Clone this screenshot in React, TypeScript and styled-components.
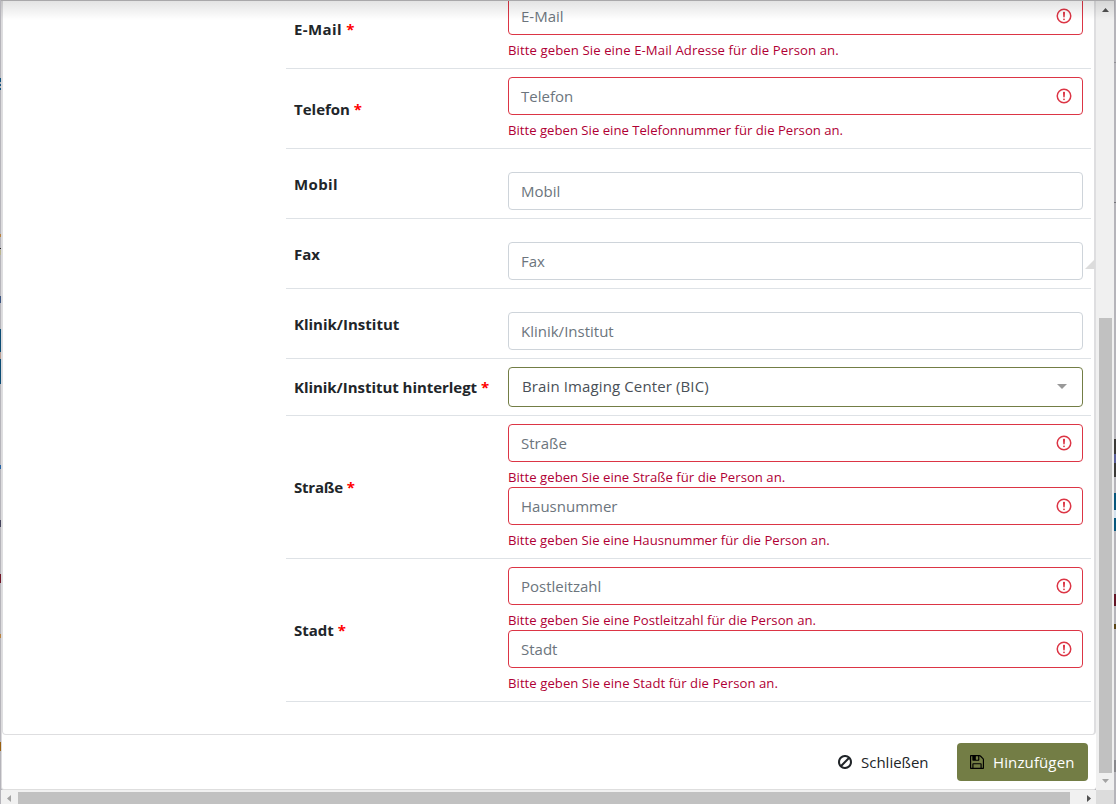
import React from "react";
import styled, { createGlobalStyle } from "styled-components";

const Global = createGlobalStyle`
  *, *::before, *::after { box-sizing: border-box; }
  body { margin: 0; overflow: hidden; background: #b5b4ba; color: #212529;
    font: 15px/24px "Open Sans", "Noto Sans", sans-serif; }
`;

const Page = styled.div`
  position: relative;
  height: 804px;
  width: 1116px;
  display: grid;
  grid-template-columns: 1095px 18px;
  grid-template-rows: 790px 14px;
  padding-left: 1px;
  overflow: hidden;
`;
const Dialog = styled.main`
  display: flex;
  flex-direction: column;
  background: #fff;
  border-left: 1px solid #dcdbdd;
  border-bottom: 1px solid #dedede;
  border-radius: 0 0 3px 3px;
  min-width: 0;
`;
const Body = styled.section`
  height: 735px;
  padding: 0 3px 0 283px;
  border: solid #dedee0;
  border-width: 0 2px 1px 1px;
  border-radius: 0 0 4px 4px;
  overflow: hidden;
`;
const Rows = styled.div`
  margin-top: -11px;
`;
const Row = styled.div<{ $top?: number }>`
  display: grid;
  grid-template-columns: 206px 575px;
  column-gap: 8px;
  align-items: center;
  padding: ${(p) => p.$top ?? 8}px 8px 8px;
  border-bottom: 1px solid #dee2e6;
`;
const Label = styled.label<{ $lift?: boolean; $track?: number }>`
  font-weight: 700;
  white-space: nowrap;
  letter-spacing: ${(p) => p.$track ?? 0}px;
  margin-top: ${(p) => (p.$lift ? -14 : 0)}px;
`;
const Star = styled.span`
  color: #f00;
`;
const Control = styled.div<{ $invalid?: boolean }>`
  display: flex;
  align-items: center;
  justify-content: space-between;
  height: 38px;
  padding: 0 9px 0 12px;
  background: #fff;
  border: 1px solid ${(p) => (p.$invalid ? "#dc3545" : "#ced4da")};
  border-radius: 4px;
  color: #6c757d;
`;
const Select = styled(Control)`
  height: 40px;
  padding: 0 15px 2px 13px;
  border-color: #737d45;
  color: #495057;
  letter-spacing: 0.12px;
`;
const Caret = styled.i`
  border: solid transparent;
  border-width: 5px 5px 0;
  border-top-color: #999;
`;
const Feedback = styled.div<{ $track?: number }>`
  height: 21px;
  margin-top: 4px;
  color: #b00035;
  font-size: 13.15px;
  line-height: 22px;
  letter-spacing: ${(p) => p.$track ?? 0.02}px;
  white-space: nowrap;
`;
const Footer = styled.footer`
  height: 54px;
  display: flex;
  justify-content: flex-end;
  align-items: flex-start;
  gap: 16px;
  padding: 8px 8px 0 0;
`;
const Button = styled.button<{ $primary?: boolean }>`
  display: flex;
  align-items: center;
  gap: 9px;
  height: 38px;
  width: ${(p) => (p.$primary ? 131 : 116)}px;
  padding: 0 13px;
  border: 0;
  border-radius: 4px;
  background: ${(p) => (p.$primary ? "#737d45" : "transparent")};
  color: ${(p) => (p.$primary ? "#fff" : "#212529")};
  font: inherit;
  letter-spacing: ${(p) => (p.$primary ? 0.12 : 0)}px;
  svg { fill: ${(p) => (p.$primary ? "#000" : "#212529")}; flex: none; }
`;
const VBar = styled.div`
  display: flex;
  flex-direction: column;
  align-items: center;
  background: #f0f0f0;
  padding: 8px 0 0 1px;
`;
const VThumb = styled.div`
  width: 13px;
  height: 455px;
  margin: 305px 0 6px;
  background: #c1c1c1;
`;
const HBar = styled.div`
  display: flex;
  align-items: center;
  background: #f1f1f1;
  padding: 2px 6px 0 6px;
`;
const HThumb = styled.div`
  width: 1052px;
  height: 12px;
  margin: 0 17px 0 6px;
  background: #c1c1c1;
  flex: none;
`;
const Corner = styled.div`
  background: #dcdcdc;
`;
const Arrow = styled.svg`
  display: block;
  flex: none;
`;
const TopShade = styled.div`
  position: absolute;
  inset: 0 1px auto 1px;
  height: 20px;
  border-top: 1px solid #a9a8aa;
  background: linear-gradient(rgba(0, 0, 0, 0.11), rgba(0, 0, 0, 0));
`;
const Grip = styled.i`
  position: absolute;
  left: 1085px;
  top: 259px;
  border: solid transparent;
  border-width: 0 0 10px 10px;
  border-bottom-color: #dcdcdc;
`;
const Sliver = styled.i<{ $x: number; $y: number; $h: number; $c: string }>`
  position: absolute;
  left: ${(p) => p.$x}px;
  top: ${(p) => p.$y}px;
  width: ${(p) => (p.$x ? 2 : 1)}px;
  height: ${(p) => p.$h}px;
  background: ${(p) => p.$c};
`;

const ErrorIcon = () => (
  <svg width="18" height="18" viewBox="0 0 12 12" fill="none" stroke="#dc3545">
    <circle cx="6" cy="6" r="4.5" />
    <path strokeLinejoin="round" d="M5.8 3.6h.4L6 6.5z" />
    <circle cx="6" cy="8.2" r=".6" fill="#dc3545" stroke="none" />
  </svg>
);
const BanIcon = () => (
  <svg width="14" height="14" viewBox="0 125 1536 1536">
    <path d="M1312 893q0-161-87-295l-754 753q137 89 297 89 111 0 211.5-43.5t173.5-116.5 116-174.5 43-212.5zM313 1192l755-754q-135-91-300-91-148 0-273 73t-198 199-73 274q0 162 89 299zM1536 893q0 157-61 300t-163.5 246-245 164-298.5 61-298.5-61-245-164-163.5-246-61-300 61-299.5 163.5-245.5 245-164 298.5-61 298.5 61 245 164 163.5 245.5 61 299.5z" />
  </svg>
);
const SaveIcon = () => (
  <svg width="14" height="14" viewBox="0 128 1536 1536">
    <path d="M384 1536h768v-384h-768v384zM1280 1536h128v-896q0-14-10-38.5t-20-34.5l-281-281q-10-10-34-20t-39-10v416q0 40-28 68t-68 28h-576q-40 0-68-28t-28-68v-416h-128v1280h128v-416q0-40 28-68t68-28h832q40 0 68 28t28 68v416zM896 608v-320q0-13-9.5-22.5t-22.5-9.5h-192q-13 0-22.5 9.5t-9.5 22.5v320q0 13 9.5 22.5t22.5 9.5h192q13 0 22.5-9.5t9.5-22.5zM1536 640v928q0 40-28 68t-68 28h-1344q-40 0-68-28t-28-68v-1344q0-40 28-68t68-28h928q40 0 88 20t76 48l280 280q28 28 48 76t20 88z" />
  </svg>
);

type Entry = { name: string; error?: string; track?: number };
const Field = ({ name, error, track }: Entry) => (
  <>
    <Control $invalid={!!error}>
      <span>{name}</span>
      {error && <ErrorIcon />}
    </Control>
    {error && <Feedback $track={track}>Bitte geben Sie eine {error} für die Person an.</Feedback>}
  </>
);

const groups: { label: string; track?: number; fields: Entry[] }[] = [
  { label: "E-Mail", track: 0.4, fields: [{ name: "E-Mail", error: "E-Mail Adresse", track: 0.09 }] },
  { label: "Telefon", fields: [{ name: "Telefon", error: "Telefonnummer", track: 0 }] },
  { label: "Mobil", track: 0.4, fields: [{ name: "Mobil" }] },
  { label: "Fax", fields: [{ name: "Fax" }] },
  { label: "Klinik/Institut", fields: [{ name: "Klinik/Institut" }] },
  { label: "Klinik/Institut hinterlegt", track: -0.04, fields: [] },
  { label: "Straße", track: -0.2, fields: [{ name: "Straße", error: "Straße" }, { name: "Hausnummer", error: "Hausnummer" }] },
  { label: "Stadt", fields: [{ name: "Postleitzahl", error: "Postleitzahl", track: 0.03 }, { name: "Stadt", error: "Stadt", track: 0.04 }] },
];

const slivers: [number, number, number, string][] = [
  [0, 78, 4, "#11527e"], [0, 84, 2, "#11527e"], [0, 88, 2, "#11527e"],
  [0, 234, 3, "#b8813f"], [0, 248, 1, "#222"], [0, 250, 5, "#b9b58f"],
  [0, 296, 7, "#3c5580"], [0, 329, 23, "#0b4c75"], [0, 352, 7, "#b79c92"], [0, 359, 25, "#0b4c75"],
  [0, 465, 4, "#2463a5"], [0, 520, 7, "#45445c"], [0, 574, 9, "#701527"],
  [0, 634, 4, "#b8813f"], [0, 742, 9, "#9a600f"],
  [1114, 62, 1, "#929196"], [1114, 202, 1, "#77767b"],
  [1114, 439, 38, "#3b3937"], [1114, 454, 9, "#5b5f98"],
  [1114, 493, 38, "#08577d"], [1114, 510, 8, "#d3e1ee"],
  [1114, 594, 12, "#641627"], [1114, 624, 5, "#5a4517"], [1114, 760, 12, "#88878c"],
];

export default function App() {
  return (
    <>
      <Global />
      <Page>
        <Dialog>
          <Body>
            <Rows>
              {groups.map(({ label, track, fields }) => {
                const plain = fields.length > 0 && !fields[0].error;
                return (
                  <Row key={label} $top={plain ? 23 : 8}>
                    <Label $lift={plain} $track={track}>
                      {label} {!plain && <Star>*</Star>}
                    </Label>
                    <div>
                      {fields.length ? (
                        fields.map((f) => <Field key={f.name} {...f} />)
                      ) : (
                        <Select>
                          <span>Brain Imaging Center (BIC)</span>
                          <Caret />
                        </Select>
                      )}
                    </div>
                  </Row>
                );
              })}
            </Rows>
          </Body>
          <Footer>
            <Button>
              <BanIcon />
              <span>Schließen</span>
            </Button>
            <Button $primary>
              <SaveIcon />
              <span>Hinzufügen</span>
            </Button>
          </Footer>
        </Dialog>
        <VBar>
          <Arrow width="7" height="5" viewBox="0 0 7 5" fill="#505050"><path d="M0 4h7L3.5 0z" /></Arrow>
          <VThumb />
          <Arrow width="7" height="4" viewBox="0 0 7 4" fill="#a3a3a3"><path d="M0 0h7L3.5 4z" /></Arrow>
        </VBar>
        <HBar>
          <Arrow width="5" height="7" viewBox="0 0 5 7" fill="#a3a3a3"><path d="M4 0v7L0 3.5z" /></Arrow>
          <HThumb />
          <Arrow width="5" height="7" viewBox="0 0 5 7" fill="#505050"><path d="M0 0v7L4 3.5z" /></Arrow>
        </HBar>
        <Corner />
        <TopShade />
        <Grip />
        {slivers.map(([x, y, h, c]) => (
          <Sliver key={`${x}-${y}`} $x={x} $y={y} $h={h} $c={c} />
        ))}
      </Page>
    </>
  );
}
